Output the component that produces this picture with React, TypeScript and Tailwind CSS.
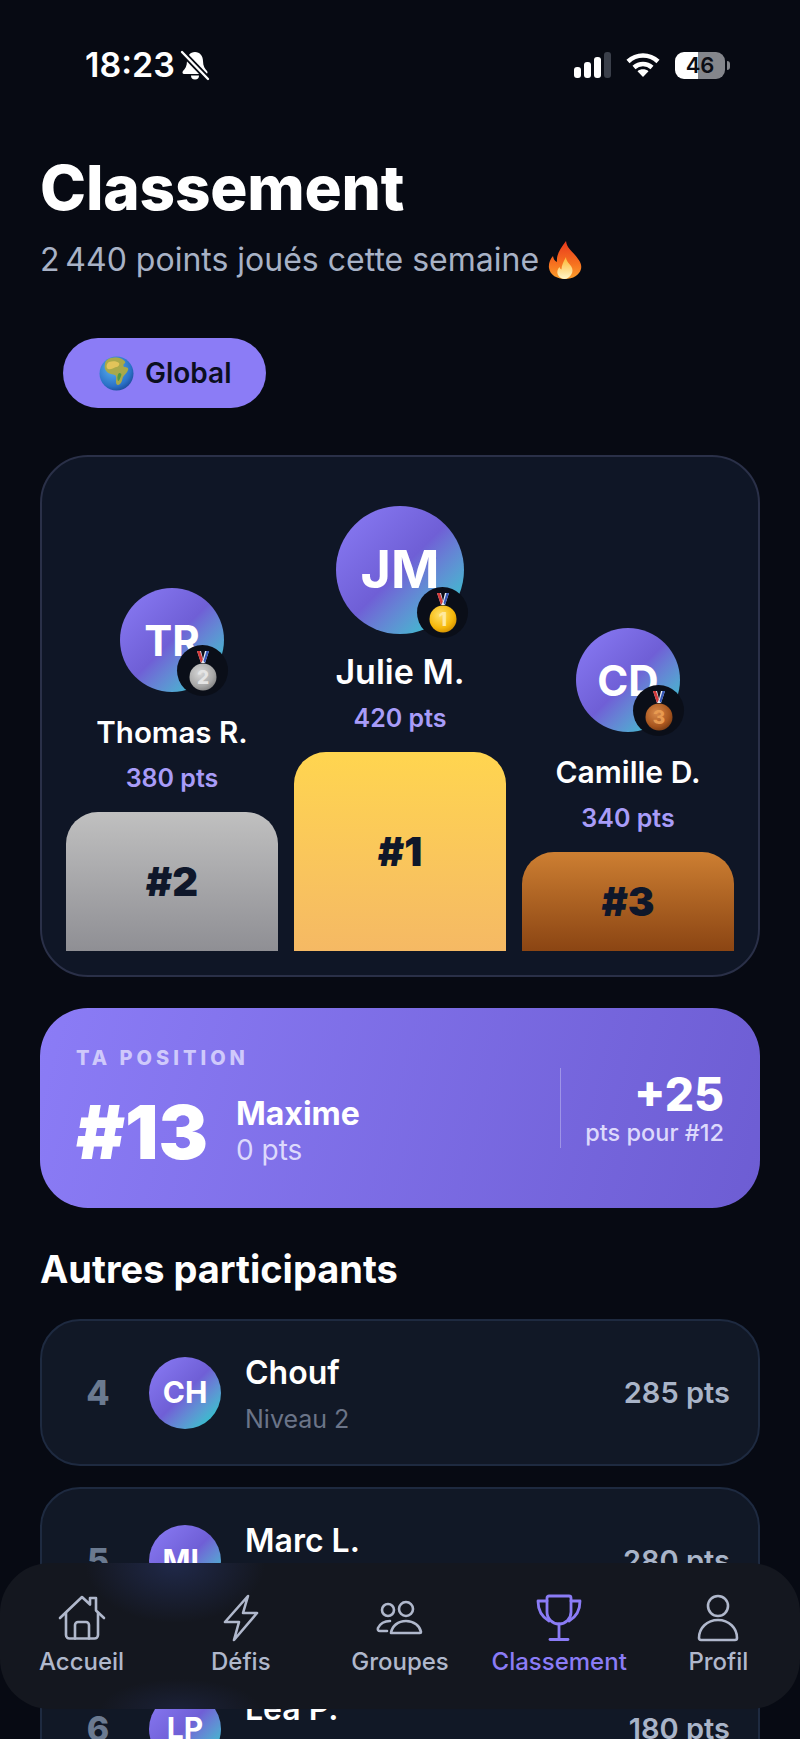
const inter = "font-['Inter','Liberation_Sans',sans-serif]";

function BellOff() {
  return (
    <svg width="32" height="32" viewBox="0 0 32 32">
      <path d="M16 3c-5 0-8 4-8 9 0 5-2 8-4 10-1 1-.5 3 1 3h22c1.500 0 2-2 1-3-2-2-4-5-4-10 0-5-3-9-8-9z" fill="#fff" />
      <path d="M12 26.500h8a4 4 0 0 1-8 0z" fill="#fff" />
      <path d="M3 3l26 27" stroke="#070a13" strokeWidth="6" />
      <path d="M3 3l26 27" stroke="#fff" strokeWidth="2.400" strokeLinecap="round" />
    </svg>
  );
}

function Signal() {
  return (
    <div className="flex items-end gap-[3px] h-[26px]">
      <div className="w-[7px] h-[11px] rounded-[3px] bg-white" />
      <div className="w-[7px] h-[16px] rounded-[3px] bg-white" />
      <div className="w-[7px] h-[21px] rounded-[3px] bg-white" />
      <div className="w-[7px] h-[26px] rounded-[3px] bg-[#3a3f4a]" />
    </div>
  );
}

function Wifi() {
  return (
    <svg width="34" height="26" viewBox="0 0 34 26" fill="none" stroke="#fff" strokeWidth="4.500">
      <path d="M2 9.500c8.500-8 21.500-8 30 0" />
      <path d="M8 15.500c5.200-4.600 12.800-4.600 18 0" />
      <path d="M17 25l-5.500-5.800c3-2.600 8-2.600 11 0z" fill="#fff" stroke="none" />
    </svg>
  );
}

function Battery() {
  return (
    <div className="flex items-center gap-[2px]">
      <div className={`relative w-[50px] h-[27px] rounded-[9px] overflow-hidden bg-linear-to-r from-white from-[46%] to-[#84868c] to-[46%] flex items-center justify-center text-[22px] font-semibold text-[#0b0d14] ${inter}`}>
        46
      </div>
      <div className="w-[3px] h-[9px] rounded-r-full bg-[#84868c]" />
    </div>
  );
}

function Flame() {
  return (
    <svg width="34" height="38" viewBox="0 0 34 38">
      <defs>
        <linearGradient id="flameOuter" x1="0" y1="0" x2="0" y2="1">
          <stop offset="0" stopColor="#e8391d" />
          <stop offset="0.6" stopColor="#f6711f" />
          <stop offset="1" stopColor="#fca02c" />
        </linearGradient>
        <linearGradient id="flameInner" x1="0" y1="0" x2="0" y2="1">
          <stop offset="0" stopColor="#fdb52f" />
          <stop offset="1" stopColor="#fff6c9" />
        </linearGradient>
      </defs>
      <path d="M18 0c1 7 5 9 9 14 5 6 7 9 6 14-1.500 6-8 10-16 10S2 34 1 27c-.7-5 1.500-9 4-12 .5 3 1.500 5 4 6C8 13 13 7 18 0z" fill="url(#flameOuter)" />
      <path d="M18 16c0 4 3 6 5 9 2 3 2 6 0 9-1.500 2-4 4-6.500 4s-5-1.500-6.500-4c-1.500-3-.5-6 1.500-8 .5 1.500 1 2 2 2.500 0-4 2-8 4.500-12.500z" fill="url(#flameInner)" />
    </svg>
  );
}

function Earth() {
  return (
    <svg width="35" height="35" viewBox="0 0 35 35">
      <defs>
        <radialGradient id="sea" cx="0.4" cy="0.35" r="0.75">
          <stop offset="0" stopColor="#5ab3f0" />
          <stop offset="0.7" stopColor="#2b72c8" />
          <stop offset="1" stopColor="#173f8c" />
        </radialGradient>
      </defs>
      <circle cx="17.500" cy="17.500" r="17" fill="url(#sea)" />
      <path d="M8 4c4-3 10-3 15-1 2 1 4 3 3 4-2 1-2 3-1 4 3 0 5 1 4 3-1 3-3 4-5 7-1 3-1 5-3 7-2 2-4 1-4-2 0-3 1-5-1-7-2-1-6-1-8-3-2-2-3-5-2-8 0-2 1-3 2-4z" fill="#a9a94a" />
      <path d="M10 6c3-1 8-1 10 1 1 2-1 4-3 4-3 1-5 3-8 2-2-1-2-5 1-7z" fill="#e2c45a" />
      <path d="M20 17c2 0 3 1 2 3-1 3-2 5-3 5-1-2-1-6 1-8z" fill="#4f9a46" />
    </svg>
  );
}

function Medal({ n, light, mid, dark, digit }: { n: string; light: string; mid: string; dark: string; digit: string }) {
  const id = `medal${n}`;
  return (
    <svg width="28" height="40" viewBox="0 0 28 40">
      <defs>
        <radialGradient id={id} cx="0.4" cy="0.35" r="0.75">
          <stop offset="0" stopColor={light} />
          <stop offset="0.65" stopColor={mid} />
          <stop offset="1" stopColor={dark} />
        </radialGradient>
      </defs>
      <path d="M8 0h4l3 12h-3z" fill="#d7dbe6" />
      <path d="M8 0h3l3 9-2 3z" fill="#d33a3a" />
      <path d="M20 0h-4l-3 12h3z" fill="#e8ecf4" />
      <path d="M20 0h-2.500l-3 10 1.500 2z" fill="#3457b8" />
      <circle cx="14" cy="26" r="13.500" fill={`url(#${id})`} />
      <text x="14" y="33" textAnchor="middle" fontSize="19" fontWeight="800" fontFamily="Inter, sans-serif" fill={digit}>
        {n}
      </text>
    </svg>
  );
}

function HomeIcon() {
  return (
    <svg width="48" height="46" viewBox="0 0 48 46" fill="none" stroke="currentColor" strokeWidth="2.600" strokeLinecap="round" strokeLinejoin="round">
      <path d="M2 23L24 2l8 7.500V3h6v12.500L46 23" />
      <path d="M8 18v22a3.500 3.500 0 0 0 3.500 3.500h25A3.500 3.500 0 0 0 40 40V18" />
      <path d="M17 43.500V30a3 3 0 0 1 3-3h8a3 3 0 0 1 3 3v13.500" />
    </svg>
  );
}

function BoltIcon() {
  return (
    <svg width="36" height="48" viewBox="0 0 36 48" fill="none" stroke="currentColor" strokeWidth="2.600" strokeLinecap="round" strokeLinejoin="round">
      <path d="M25 2L2 28h14l-5 18 23-27H20z" />
    </svg>
  );
}

function GroupIcon() {
  return (
    <svg width="48" height="36" viewBox="0 0 48 36" fill="none" stroke="currentColor" strokeWidth="2.600" strokeLinecap="round" strokeLinejoin="round">
      <circle cx="12" cy="10" r="6" />
      <circle cx="30" cy="9" r="7" />
      <path d="M15 33c1-7 7-12 15-12s14 5 15 11c0 .7-.5 1-1 1z" />
      <path d="M14 21c-6 0-10 3-12 7-.5 1.500 0 3 2 3h7" />
    </svg>
  );
}

function TrophyIcon() {
  return (
    <svg width="46" height="48" viewBox="0 0 46 48" fill="none" stroke="currentColor" strokeWidth="2.800" strokeLinecap="round" strokeLinejoin="round">
      <path d="M13 2h20a2 2 0 0 1 2 2v14a12 12 0 0 1-24 0V4a2 2 0 0 1 2-2z" />
      <path d="M11 7H2c0 9 4 16 11 20" />
      <path d="M35 7h9c0 9-4 16-11 20" />
      <path d="M23 30v15" />
      <path d="M14 45.500h18" />
    </svg>
  );
}

function UserIcon() {
  return (
    <svg width="44" height="48" viewBox="0 0 44 48" fill="none" stroke="currentColor" strokeWidth="2.600" strokeLinecap="round" strokeLinejoin="round">
      <circle cx="22" cy="12" r="10" />
      <path d="M3 44c0-10 8-18 19-18s19 8 19 18c0 1-.7 2-2 2H5c-1.300 0-2-1-2-2z" />
    </svg>
  );
}

const podium = [
  {
    initials: "TR",
    name: "Thomas R.",
    pts: "380 pts",
    rank: "#2",
    avatar: "w-[104px] h-[104px] text-[42px]",
    nameText: "mt-[23px] text-[29.500px]",
    bar: "h-[139px] from-[#c0c0c0] to-[#8f8f94]",
    medal: <Medal n="2" light="#d8d8d8" mid="#a8a8a8" dark="#777" digit="#e4e4e4" />,
  },
  {
    initials: "JM",
    name: "Julie M.",
    pts: "420 pts",
    rank: "#1",
    avatar: "w-[128px] h-[128px] text-[52px]",
    nameText: "mt-[21px] text-[34px]",
    bar: "h-[199px] from-[#ffd54f] to-[#f5b964]",
    medal: <Medal n="1" light="#ffe066" mid="#f5b70a" dark="#c98500" digit="#ffe9a0" />,
  },
  {
    initials: "CD",
    name: "Camille D.",
    pts: "340 pts",
    rank: "#3",
    avatar: "w-[104px] h-[104px] text-[42px]",
    nameText: "mt-[23px] text-[30px]",
    bar: "h-[99px] from-[#cd7f32] to-[#8b4513]",
    medal: <Medal n="3" light="#d98a4a" mid="#a8561f" dark="#6e3510" digit="#e89a50" />,
  },
];

const others = [
  { rank: 4, initials: "CH", name: "Chouf", pts: "285 pts" },
  { rank: 5, initials: "ML", name: "Marc L.", pts: "280 pts" },
  { rank: 6, initials: "LP", name: "Léa P.", pts: "180 pts" },
];

const tabs = [
  { label: "Accueil", icon: <HomeIcon /> },
  { label: "Défis", icon: <BoltIcon /> },
  { label: "Groupes", icon: <GroupIcon /> },
  { label: "Classement", icon: <TrophyIcon />, active: true },
  { label: "Profil", icon: <UserIcon /> },
];

export default function App() {
  return (
    <div className={`relative w-[800px] h-[1739px] overflow-hidden bg-[#070a13] text-white ${inter}`}>
      {/* status bar */}
      <div className="flex items-center justify-between h-[34px] pl-[85px] pr-[70px] pt-[48px] box-content">
        <div className="flex items-center gap-[4px]">
          <span className="text-[34px] leading-[34px] font-semibold">18:23</span>
          <BellOff />
        </div>
        <div className="flex items-center gap-[15px]">
          <Signal />
          <Wifi />
          <Battery />
        </div>
      </div>

      <div className="px-10">
        <h1 className="mt-[76px] text-[62px] leading-[60px] font-extrabold tracking-[-0.2px]">Classement</h1>
        <p className="mt-[23px] flex items-center gap-[9px] text-[32px] leading-[38px] text-[#a8b2c6]">
          {"2\u202f440 points joués cette semaine"} <Flame />
        </p>

        <button className="mt-[59px] ml-[23px] flex items-center gap-[11px] h-[70px] pl-[36px] pr-[34px] rounded-full bg-[#8b7cf6] text-[#0b0f1f] text-[28px] font-semibold">
          <Earth />
          Global
        </button>

        {/* podium */}
        <div className="mt-[47px] h-[522px] rounded-[48px] border-2 border-[#2a3048] bg-[#0f1626] flex items-end justify-center gap-[16px] pb-[24px]">
          {podium.map((p) => (
            <div key={p.rank} className="w-[212px] flex flex-col items-center">
              <div className={`relative rounded-full bg-linear-135 from-[#8b7cf6] via-[#6f5fd6] via-50% to-[#22c5cc] to-90% flex items-center justify-center font-bold ${p.avatar}`}>
                {p.initials}
                <div className="absolute -right-[4px] -bottom-[4px] w-[51px] h-[51px] rounded-full bg-[#0a0e18] flex items-center justify-center">
                  {p.medal}
                </div>
              </div>
              <div className={`${p.nameText} leading-[34px] font-semibold whitespace-nowrap`}>{p.name}</div>
              <div className="mt-[14px] text-[25px] leading-[30px] font-semibold text-[#a89cf8]">{p.pts}</div>
              <div className={`mt-[19px] w-full rounded-t-[32px] bg-linear-to-b flex items-center justify-center text-[40px] font-black text-[#0f172a] ${p.bar}`}>
                {p.rank}
              </div>
            </div>
          ))}
        </div>

        {/* ta position */}
        <div className="mt-[31px] h-[200px] rounded-[48px] bg-linear-[105deg] from-[#8b7cf6] to-[#6d5dd3] flex items-center justify-between px-9">
          <div className="pt-[2px]">
            <div className="text-[20px] leading-[24px] font-extrabold tracking-[4px] text-[#cfc9fb]">TA POSITION</div>
            <div className="mt-[22px] flex items-center gap-[28px]">
              <div className="text-[74px] leading-[80px] font-black">#13</div>
              <div>
                <div className="text-[32px] leading-[36px] font-bold">Maxime</div>
                <div className="text-[28px] leading-[36px] text-[#ddd9fc]">0 pts</div>
              </div>
            </div>
          </div>
          <div className="flex items-center">
            <div className="w-px h-[80px] bg-white/30" />
            <div className="pl-[24px] flex flex-col items-end">
              <div className="text-[46px] leading-[50px] font-extrabold">+25</div>
              <div className="text-[23.500px] leading-[28px] font-medium text-[#ddd9fc]">pts pour #12</div>
            </div>
          </div>
        </div>

        <h2 className="mt-[40px] text-[38px] leading-[42px] font-bold">Autres participants</h2>

        <div className="mt-[29px] flex flex-col gap-[21px]">
          {others.map((o) => (
            <div key={o.rank} className="shrink-0 h-[147px] rounded-[40px] border-2 border-[#1e2a40] bg-[#111826] flex items-center px-[28px]">
              <div className="w-[56px] text-center text-[34px] font-extrabold text-[#6b7a90]">{o.rank}</div>
              <div className="ml-[23px] w-[72px] h-[72px] rounded-full bg-linear-135 from-[#8b7cf6] via-[#6f5fd6] via-50% to-[#22c5cc] to-90% flex items-center justify-center text-[30px] font-bold">
                {o.initials}
              </div>
              <div className="ml-[24px] pt-[4px]">
                <div className="text-[32px] leading-[36px] font-semibold">{o.name}</div>
                <div className="mt-[13px] text-[25px] leading-[30px] text-[#6b7488]">Niveau 2</div>
              </div>
              <div className="ml-auto text-[29px] font-semibold text-[#a9b4c8]">{o.pts}</div>
            </div>
          ))}
        </div>
      </div>

      {/* tab bar */}
      <nav className="absolute inset-x-0 bottom-[30px] h-[146px] px-[2px] rounded-[50px] bg-[#14171f] bg-[radial-gradient(ellipse_90px_60px_at_175px_0px,#20294a,transparent),radial-gradient(ellipse_80px_30px_at_180px_146px,#1b2138,transparent)] grid grid-cols-5 pt-[31px]">
        {tabs.map((t) => (
          <div key={t.label} className={`flex flex-col items-center ${t.active ? "text-[#8b7cf6]" : "text-[#b0b8cc]"}`}>
            <div className="h-[48px] flex items-center justify-center">{t.icon}</div>
            <div className="mt-[5px] text-[24px] leading-[30px] font-medium">{t.label}</div>
          </div>
        ))}
      </nav>
    </div>
  );
}
